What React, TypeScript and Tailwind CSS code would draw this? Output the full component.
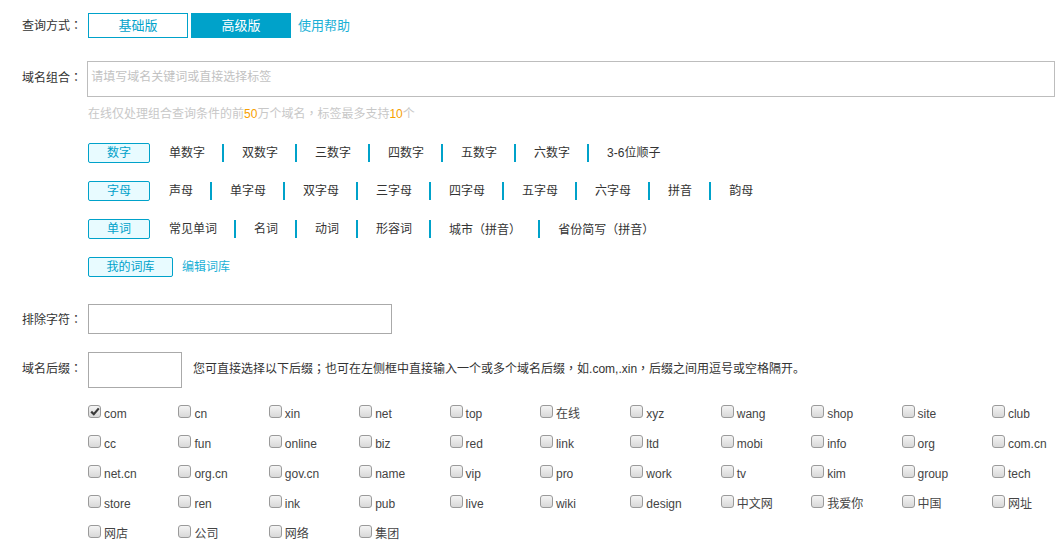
import React, { Fragment } from 'react';

// 全角标点用繁体字形（居中）显示
const P: React.FC<{ c: string }> = ({ c }) => <span className="font-['Noto_Sans_CJK_TC',sans-serif]">{c}</span>;

const withPunct = (s: string) =>
  s.split(/([：，；（）])/).map((part, i) =>
    /^[：，；（）]$/.test(part) ? <P key={i} c={part} /> : <Fragment key={i}>{part}</Fragment>
  );

const tagRows: { head: string; items: string[] }[] = [
  { head: '数字', items: ['单数字', '双数字', '三数字', '四数字', '五数字', '六数字', '3-6位顺子'] },
  { head: '字母', items: ['声母', '单字母', '双字母', '三字母', '四字母', '五字母', '六字母', '拼音', '韵母'] },
  { head: '单词', items: ['常见单词', '名词', '动词', '形容词', '城市（拼音）', '省份简写（拼音）'] },
];

const suffixes = [
  'com', 'cn', 'xin', 'net', 'top', '在线', 'xyz', 'wang', 'shop', 'site', 'club',
  'cc', 'fun', 'online', 'biz', 'red', 'link', 'ltd', 'mobi', 'info', 'org', 'com.cn',
  'net.cn', 'org.cn', 'gov.cn', 'name', 'vip', 'pro', 'work', 'tv', 'kim', 'group', 'tech',
  'store', 'ren', 'ink', 'pub', 'live', 'wiki', 'design', '中文网', '我爱你', '中国', '网址',
  '网店', '公司', '网络', '集团',
];

const Check: React.FC<{ checked?: boolean }> = ({ checked }) => (
  <span className="relative w-[13px] h-[13px] shrink-0 rounded-[3px] border border-[#9a9a9a] bg-gradient-to-b from-[#f4f4f4] to-[#d8d8d8] flex items-center justify-center">
    {checked && (
      <svg width="10" height="9" viewBox="0 0 10 9">
        <path d="M1.2 4.6 L3.8 7.2 L8.8 1.4" fill="none" stroke="#3a3a3a" strokeWidth="2.2" />
      </svg>
    )}
  </span>
);

const App: React.FC = () => {
  return (
    <div className="w-[1055px] h-[548px] overflow-hidden bg-white text-[12px] text-[#333] font-['Liberation_Sans','Noto_Sans_CJK_SC',sans-serif]">
      {/* 查询方式 */}
      <div className="flex items-center pt-[13px] pl-[22px] h-[38px]">
        <span className="w-[66px] leading-[25px]">{withPunct('查询方式：')}</span>
        <button className="w-[100px] h-[25px] border border-[#00a2ca] text-[#00a2ca] text-[13px]">基础版</button>
        <button className="ml-[3px] w-[100px] h-[25px] bg-[#00a2ca] text-white text-[13px]">高级版</button>
        <a className="ml-[7px] text-[#1ab0d6] text-[13px]">使用帮助</a>
      </div>

      {/* 域名组合 */}
      <div className="flex items-center mt-[23px] pl-[22px]">
        <span className="w-[66px] -mt-[3px]">{withPunct('域名组合：')}</span>
        <div className="w-[980px] h-[36px] border border-[#bdbdbd] flex items-center pl-[3px] text-[#c2c2c2] pb-[4px]">
          请填写域名关键词或直接选择标签
        </div>
      </div>
      <div className="pl-[88px] mt-[8px] leading-[16px] text-[#c8c8c8]">
        在线仅处理组合查询条件的前<span className="text-[#f7a000]">50</span>万个域名<P c="，" />标签最多支持<span className="text-[#f7a000]">10</span>个
      </div>

      {/* 标签 */}
      <div className="pl-[88px] mt-[21px] flex flex-col gap-[18px]">
        {tagRows.map(row => (
          <div key={row.head} className="flex items-center h-[20px]">
            <span className="w-[62px] h-[20px] border border-[#00a2ca] bg-[#e8fbff] text-[#00a2ca] rounded-[2px] flex items-center justify-center">
              {row.head}
            </span>
            {row.items.map((t, i) => (
              <Fragment key={t}>
                {i > 0 && <span className="w-[2px] h-[18px] bg-[#00a2ca]" />}
                <span className={i === 0 ? 'pl-[19px] pr-[17px]' : 'pl-[18px] pr-[17px]'}>{withPunct(t)}</span>
              </Fragment>
            ))}
          </div>
        ))}
        <div className="flex items-center h-[20px]">
          <span className="w-[85px] h-[20px] border border-[#00a2ca] bg-[#e8fbff] text-[#00a2ca] rounded-[2px] flex items-center justify-center">
            我的词库
          </span>
          <a className="ml-[9px] text-[#1ab0d6]">编辑词库</a>
        </div>
      </div>

      {/* 排除字符 */}
      <div className="flex items-center mt-[27px] pl-[22px]">
        <span className="w-[66px]">{withPunct('排除字符：')}</span>
        <div className="w-[304px] h-[30px] border border-[#aaaaaa]" />
      </div>

      {/* 域名后缀 */}
      <div className="flex items-center mt-[18px] pl-[22px]">
        <span className="w-[66px] -mt-[3px]">{withPunct('域名后缀：')}</span>
        <div className="w-[94px] h-[36px] border border-[#aaaaaa]" />
        <span className="ml-[11px] -mt-[3px]">
          {withPunct('您可直接选择以下后缀；也可在左侧框中直接输入一个或多个域名后缀，如.com,.xin，后缀之间用逗号或空格隔开。')}
        </span>
      </div>

      {/* 后缀选择 */}
      <div className="pl-[88px] mt-[17px] grid grid-cols-[repeat(10,90.4px)_60px]">
        {suffixes.map((s, i) => (
          <label key={s} className="flex items-start h-[30px] gap-[3px]">
            <Check checked={i === 0} />
            <span className="leading-[16px] mt-[1px] whitespace-nowrap text-[#444]">{s}</span>
          </label>
        ))}
      </div>
    </div>
  );
};

export default App;
